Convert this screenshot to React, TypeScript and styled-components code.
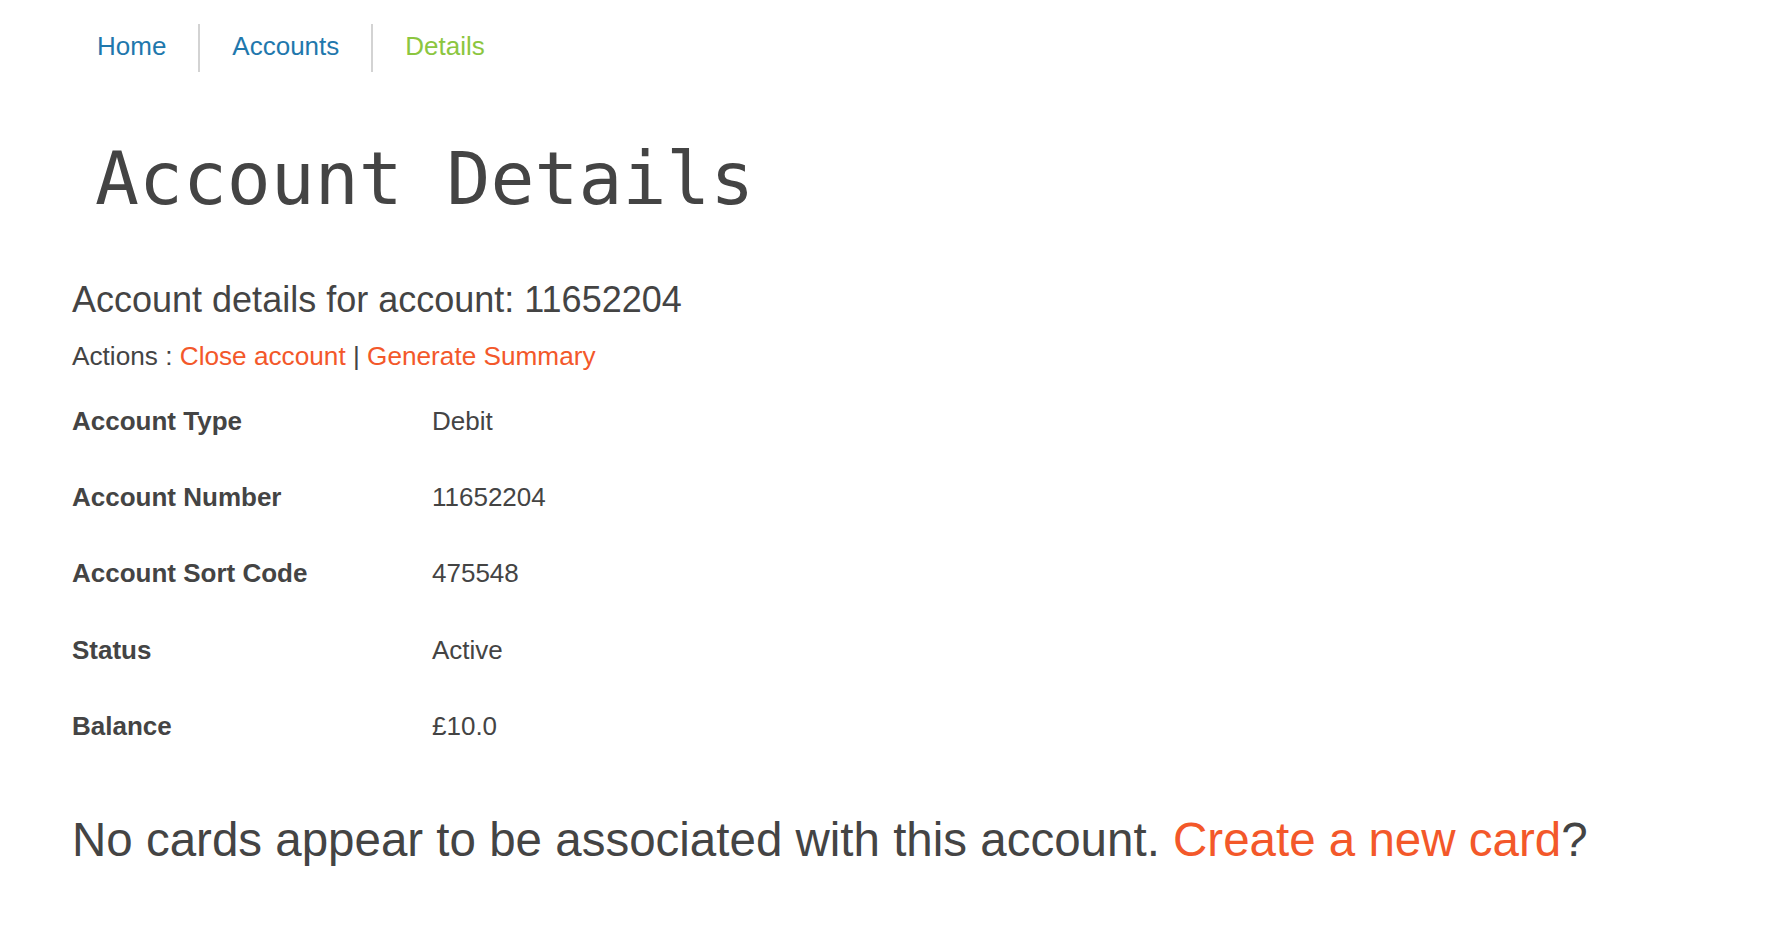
import React from "react";
import styled, { createGlobalStyle } from "styled-components";

const Global = createGlobalStyle`
  html, body { margin: 0; padding: 0; background: #ffffff; }
  body { font-family: "Liberation Sans", Arial, sans-serif; color: #444444; }
`;

const Page = styled.div`
  padding: 0 0 40px 72px;
`;

const Nav = styled.ul`
  list-style: none;
  margin: 0 0 0 -7px;
  padding: 24px 0 0 0;
  display: flex;
`;

const NavItem = styled.li<{ $first?: boolean }>`
  box-sizing: border-box;
  height: 48px;
  display: flex;
  align-items: center;
  padding: 0 32px 4px;
  border-left: ${(p) => (p.$first ? "none" : "2px solid #d3d3d3")};
`;

const NavLink = styled.a<{ $active?: boolean }>`
  font-size: 26px;
  color: ${(p) => (p.$active ? "#8cc63f" : "#1f78ad")};
  text-decoration: none;
`;

const Title = styled.h1`
  font-family: "DejaVu Sans Mono", monospace;
  font-weight: normal;
  font-size: 73px;
  line-height: 70px;
  margin: 72px 0 0 23px;
  color: #444444;
`;

const Subtitle = styled.h3`
  font-size: 36px;
  font-weight: normal;
  line-height: 40px;
  margin: 66px 0 0 0;
`;

const Actions = styled.div`
  font-size: 26.2px;
  line-height: 30px;
  margin-top: 21px;
`;

const Link = styled.a`
  color: #f3582a;
  text-decoration: none;
`;

const Details = styled.dl`
  display: grid;
  grid-template-columns: 360px 1fr;
  grid-auto-rows: 76.3px;
  align-items: center;
  margin: 12px 0 0 0;
  font-size: 26px;
`;

const Label = styled.dt`
  font-weight: bold;
`;

const Value = styled.dd`
  margin: 0;
`;

const NoCards = styled.p`
  font-size: 47.5px;
  line-height: 54px;
  margin: 49px 0 0 0;
`;

const rows: [string, string][] = [
  ["Account Type", "Debit"],
  ["Account Number", "11652204"],
  ["Account Sort Code", "475548"],
  ["Status", "Active"],
  ["Balance", "£10.0"],
];

export default function App() {
  return (
    <>
      <Global />
      <Page>
        <Nav>
          <NavItem $first>
            <NavLink href="#">Home</NavLink>
          </NavItem>
          <NavItem>
            <NavLink href="#">Accounts</NavLink>
          </NavItem>
          <NavItem>
            <NavLink href="#" $active>
              Details
            </NavLink>
          </NavItem>
        </Nav>
        <Title>Account Details</Title>
        <Subtitle>Account details for account: 11652204</Subtitle>
        <Actions>
          Actions : <Link href="#">Close account</Link> |{" "}
          <Link href="#">Generate Summary</Link>
        </Actions>
        <Details>
          {rows.map(([k, v]) => (
            <React.Fragment key={k}>
              <Label>{k}</Label>
              <Value>{v}</Value>
            </React.Fragment>
          ))}
        </Details>
        <NoCards>
          No cards appear to be associated with this account.{" "}
          <Link href="#">Create a new card</Link>?
        </NoCards>
      </Page>
    </>
  );
}
